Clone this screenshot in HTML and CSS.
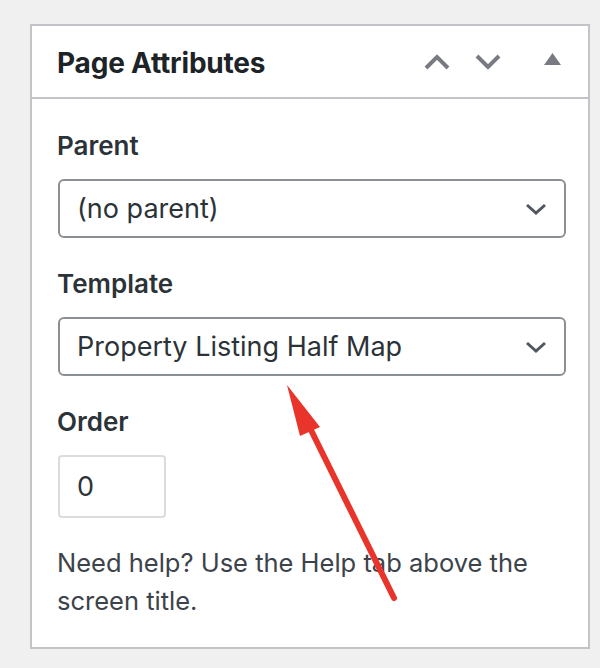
FILE: index.html
```html
<!DOCTYPE html>
<html lang="en">
<head>
  <meta charset="UTF-8" />
  <meta name="viewport" content="width=device-width, initial-scale=1.0" />
  <title>Page Attributes</title>
  <link rel="stylesheet" href="styles.css">
</head>
<body>
  <div class="postbox">
    <div class="postbox-header">
      <h2>Page Attributes</h2>
      <div class="handle-actions">
        <svg class="icon-up" width="28" height="18" viewBox="0 0 28 18">
          <polyline points="3,15 14,4 25,15" fill="none" stroke="#787c82" stroke-width="4" />
        </svg>
        <svg class="icon-down" width="28" height="18" viewBox="0 0 28 18">
          <polyline points="3,3 14,14 25,3" fill="none" stroke="#787c82" stroke-width="4" />
        </svg>
        <svg class="icon-toggle" width="17" height="13" viewBox="0 0 17 13">
          <polygon points="8.5,0 17,12 0,12" fill="#787c82" />
        </svg>
      </div>
    </div>

    <div class="inside">
      <p class="label">Parent</p>
      <div class="select">
        <span>(no parent)</span>
        <svg width="22" height="12" viewBox="0 0 22 12">
          <polyline points="2,2 11,10 20,2" fill="none" stroke="#50575e" stroke-width="3" />
        </svg>
      </div>

      <p class="label">Template</p>
      <div class="select">
        <span>Property Listing Half Map</span>
        <svg width="22" height="12" viewBox="0 0 22 12">
          <polyline points="2,2 11,10 20,2" fill="none" stroke="#50575e" stroke-width="3" />
        </svg>
      </div>

      <p class="label">Order</p>
      <div class="number-input">0</div>

      <p class="help">Need help? Use the Help tab above the screen title.</p>
    </div>
  </div>

  <!-- annotation arrow drawn over the screenshot -->
  <svg class="arrow" width="600" height="668" viewBox="0 0 600 668">
    <line x1="394" y1="598" x2="308" y2="424" stroke="#e8342a" stroke-width="6" stroke-linecap="round" />
    <polygon points="287,385 300,436 320,427" fill="#e8342a" />
  </svg>
</body>
</html>
```

FILE: styles.css
```css
body {
  margin: 0;
  padding: 24px 10px 0 30px;
  background: #f0f0f1;
  font-family: Inter, "Noto Sans", sans-serif;
  color: #3c434a;
  height: 668px;
  box-sizing: border-box;
  overflow: hidden;
}

.postbox {
  width: 560px;
  box-sizing: border-box;
  background: #fff;
  border: 2px solid #c3c4c7;
}

.postbox-header {
  display: flex;
  align-items: center;
  height: 73px;
  box-sizing: border-box;
  border-bottom: 2px solid #c3c4c7;
  padding: 2px 27px 0 25px;
}

.postbox-header h2 {
  margin: 0;
  font-size: 28px;
  font-weight: 700;
  color: #1d2327;
  letter-spacing: -0.2px;
}

.handle-actions {
  margin-left: auto;
  margin-top: -2px;
  display: flex;
  align-items: center;
}

.icon-up, .icon-down {
  display: block;
}

.icon-down {
  margin-left: 23px;
}

.icon-toggle {
  display: block;
  margin-left: 42px;
  margin-top: -4px;
}

.inside {
  padding: 30px 22px 26px 25px;
}

.label {
  margin: 0 0 16px;
  font-size: 26px;
  line-height: 34px;
  font-weight: 600;
  color: #2c3338;
}

.select {
  display: flex;
  align-items: center;
  justify-content: space-between;
  height: 59px;
  margin: 0 0 29px 1px;
  padding: 0 17px 0 17px;
  box-sizing: border-box;
  border: 2px solid #8c8f94;
  border-radius: 6px;
  font-size: 27px;
  color: #2c3338;
}

.select svg {
  display: block;
}

.number-input {
  width: 108px;
  height: 63px;
  margin-left: 1px;
  box-sizing: border-box;
  border: 2px solid #dcdcde;
  border-radius: 4px;
  padding-left: 17px;
  display: flex;
  align-items: center;
  font-size: 27px;
  color: #2c3338;
}

.help {
  margin: 26px 0 0;
  font-size: 25.5px;
  line-height: 38.4px;
  color: #3c434a;
}

.arrow {
  position: absolute;
  left: 0;
  top: 0;
  pointer-events: none;
}
```
